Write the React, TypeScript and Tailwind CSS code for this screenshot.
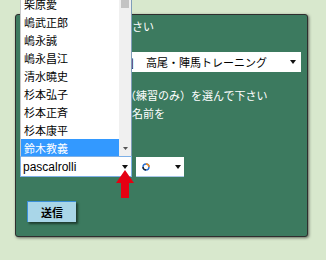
import React from "react";

const names = [
  "柴原愛",
  "嶋武正郎",
  "嶋永誠",
  "嶋永昌江",
  "清水曉史",
  "杉本弘子",
  "杉本正斉",
  "杉本康平",
  "鈴木教義",
];

function Caret() {
  return (
    <svg width="6" height="4" viewBox="0 0 6 4" className="block">
      <polygon points="0,0 6,0 3,4" fill="#111" />
    </svg>
  );
}

export default function App() {
  return (
    <div className="relative w-[326px] h-[260px] overflow-hidden bg-[#d8e8cd] pt-[14px] pl-[15px] font-['Noto_Sans_CJK_JP',sans-serif]">
      {/* card */}
      <div className="w-[293px] h-[223px] bg-[#3c7a5f] border border-[#2e2e2e] rounded-[3px] shadow-[1px_1px_3px_rgba(0,0,0,0.55)] pl-[4px] text-white text-[11px]">
        <div className="mt-[5px] h-[12px] leading-[12px] whitespace-nowrap flex">
          <span className="inline-block w-[112px]" />
          <span>さい</span>
        </div>

        <div className="mt-[20px] w-[281px] h-[20px] bg-white text-black flex items-center justify-between pr-[5px] whitespace-nowrap">
          <div className="flex items-center">
            <span className="inline-block w-[114px] text-right">]</span>
            <span className="ml-[12px]">高尾・陣馬トレーニング</span>
          </div>
          <Caret />
        </div>

        <div className="mt-[17px] h-[12px] leading-[12px] whitespace-nowrap flex">
          <span className="inline-block w-[105px]" />
          <span>（練習のみ）を選んで下さい</span>
        </div>
        <div className="mt-[6px] h-[12px] leading-[12px] whitespace-nowrap flex">
          <span className="inline-block w-[112px]" />
          <span>名前を</span>
        </div>

        <div className="mt-[37px] flex items-start">
          <div className="w-[112px] h-[21px] bg-white border border-[#7eb0e6] flex items-center justify-between pl-[2px] pr-[3px] text-black text-[12px] font-['Liberation_Sans',sans-serif]">
            <span>pascalrolli</span>
            <Caret />
          </div>
          <div className="ml-[4px] mt-[1px] w-[48px] h-[20px] bg-white border-b border-[#a9c8e8] flex items-center justify-between pl-[6px] pr-[3px]">
            <svg width="8" height="8" viewBox="0 0 8 8" className="block">
              <circle cx="4" cy="4" r="3" fill="none" stroke="#2a6fd0" strokeWidth="1.4" />
              <path d="M4 1 A3 3 0 0 1 7 4" fill="none" stroke="#f08a1c" strokeWidth="1.4" />
              <path d="M4 7 A3 3 0 0 1 1 4" fill="none" stroke="#222" strokeWidth="1.4" />
            </svg>
            <Caret />
          </div>
        </div>

        <div className="mt-[24px] ml-[7px] w-[49px] h-[21px] bg-[#a9d6e8] border-l border-t border-[#3b8fd8] shadow-[2px_2px_2px_rgba(0,0,0,0.5)] flex items-center justify-center text-black text-[11px] font-bold">
          送信
        </div>
      </div>

      {/* open dropdown list */}
      <div className="absolute left-[20px] top-0 w-[112px] h-[156px] bg-white border-l border-l-[#c8c8c8] border-r border-r-[#7f9db9] overflow-hidden flex">
        <div className="flex-1 overflow-hidden">
          <div className="mt-[-5px]">
            {names.map((n, i) => (
              <div
                key={n}
                className={
                  i === names.length - 1
                    ? "h-[18px] leading-[18px] pl-[3px] text-[11px] whitespace-nowrap bg-[#3399ff] text-white"
                    : "h-[18px] leading-[18px] pl-[3px] text-[11px] whitespace-nowrap text-black"
                }
              >
                {n}
              </div>
            ))}
          </div>
        </div>
        <div className="w-[12px] bg-[#f0f0f0] flex flex-col items-center justify-between pb-[6px]">
          <div className="w-[8px] h-[8px] bg-[#c4c4c4]" />
          <svg width="5" height="3" viewBox="0 0 5 3" className="block">
            <polygon points="0,0 5,0 2.5,3" fill="#555" />
          </svg>
        </div>
      </div>

      {/* red arrow */}
      <svg width="18" height="28" viewBox="0 0 18 28" className="absolute left-[116px] top-[170px]">
        <polygon points="9,0 18,13 13,13 13,28 5,28 5,13 0,13" fill="#e60012" />
      </svg>
    </div>
  );
}
